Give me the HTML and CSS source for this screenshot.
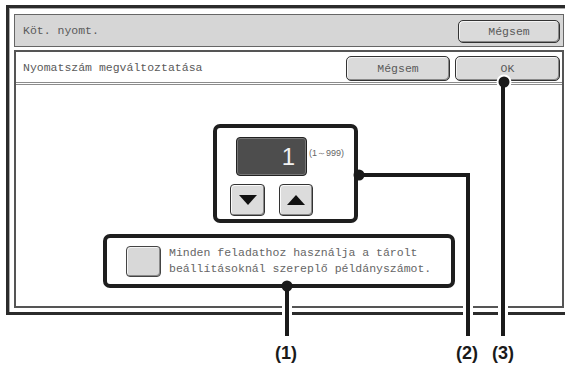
FILE: index.html
```html
<!DOCTYPE html>
<html lang="hu">
<head>
	<meta charset="UTF-8">
	<title>Nyomatszám megváltoztatása</title>
	<link rel="stylesheet" href="styles.css">
</head>
<body>
	<div id="screen">
		<div id="frame">
			<div class="titlebar">
				<span class="caption">Köt. nyomt.</span>
				<button class="btn btn-top">Mégsem</button>
			</div>
			<div class="panel">
				<div class="subbar">
					<span class="caption">Nyomatszám megváltoztatása</span>
					<button class="btn btn-sub">Mégsem</button>
					<button class="btn btn-sub btn-ok">OK</button>
				</div>
				<div class="content">
					<div class="counter mark">
						<div class="counter-row">
							<div class="display">1</div>
							<span class="range">(1～999)</span>
						</div>
						<div class="arrows">
							<button class="arrow"><svg width="18" height="10" viewBox="0 0 18 10"><polygon points="0,0 18,0 9,10" /></svg></button>
							<button class="arrow arrow-up"><svg width="18" height="10" viewBox="0 0 18 10"><polygon points="0,10 18,10 9,0" /></svg></button>
						</div>
					</div>
					<div class="option mark">
						<span class="check"></span>
						<p>Minden feladathoz használja a tárolt<br>beállításoknál szereplő példányszámot.</p>
					</div>
				</div>
			</div>
		</div>

		<!-- magyarázó vonalak -->
		<svg class="callouts" width="565" height="367" viewBox="0 0 565 367">
			<g stroke="#fff" stroke-width="10" fill="none">
				<line x1="287" y1="292" x2="287" y2="336" />
				<line x1="468" y1="180" x2="468" y2="336" />
				<line x1="503" y1="90" x2="503" y2="336" />
			</g>
			<circle cx="504" cy="82" r="7.5" fill="#fff" />
			<g stroke="#1a1a1a" stroke-width="4" fill="none">
				<line x1="287" y1="286" x2="287" y2="336" />
				<polyline points="359,175 468,175 468,336" />
				<line x1="503" y1="82" x2="503" y2="336" />
			</g>
			<g fill="#1a1a1a">
				<circle cx="287" cy="286" r="5.5" />
				<circle cx="359" cy="175" r="5.5" />
				<circle cx="504" cy="82" r="5.5" />
			</g>
			<g class="labels" text-anchor="middle">
				<text x="286" y="359">(1)</text>
				<text x="467" y="359">(2)</text>
				<text x="503" y="359">(3)</text>
			</g>
		</svg>
	</div>
</body>
</html>
```

FILE: styles.css
```css
body { margin:0;background:#fff;font-family:"Liberation Mono","DejaVu Sans Mono",monospace;font-size:11.5px;color:#5a5a5a; }
p { margin:0; }
button { font-family:inherit;font-size:inherit;color:inherit;padding:0;margin:0; }

#screen { position:relative;width:565px;height:367px;padding:5px 0 0 6px;box-sizing:border-box;overflow:hidden; }

#frame { width:562px;border:3px solid #2b2b2b;padding:6px 1px 4px 5px;box-sizing:border-box;box-shadow:inset 1px 1px 0 #aaa; }

.titlebar { display:flex;align-items:center;justify-content:space-between;height:33px;box-sizing:border-box;padding:0 3px 0 8px;background:#d6d6d6;border:1px solid #666; }
.caption { letter-spacing:0; }

.btn { background:#dadada;border:1px solid #333;border-radius:5px;box-shadow:inset -1px -1px 0 #8a8a8a,inset 1px 1px 0 #f4f4f4;text-align:center; }
.btn-top { width:102px;height:23px;margin-top:1px; }

.panel { margin-top:3px;border:2px solid #555;height:258px;box-sizing:border-box;display:flex;flex-direction:column; }

.subbar { display:flex;align-items:center;height:33px;box-sizing:border-box;padding:0 2px 0 7px;border-bottom:3px double #8c8c8c; }
.subbar .caption { flex:1; }
.btn-sub { width:104px;height:25px;margin-left:5px;margin-top:3px; }
.btn-ok { width:105px; }

.content { flex:1;display:flex;flex-direction:column;align-items:flex-start; }

.mark { border:4px solid #1e1e1e;border-radius:7px;box-sizing:border-box; }

.counter { margin:39px 0 0 197px;width:145px;height:99px;padding:9px 0 0 13px; }
.counter-row { display:flex;align-items:flex-start;margin-left:6px; }
.display { width:71px;height:39px;box-sizing:border-box;background:#4d4d4d;border:1px solid #222;border-radius:4px;box-shadow:inset 0 0 0 1px #777;color:#f2f2f2;font-family:"Liberation Sans",Arial,sans-serif;font-size:24px;line-height:37px;text-align:right;padding-right:11px; }
.range { font-family:"Liberation Sans",Arial,sans-serif;font-size:9px;color:#666;margin:10px 0 0 2px;white-space:nowrap; }

.arrows { display:flex;gap:14px;margin-top:8px; }
.arrow { width:35px;height:32px;background:#dcdcdc;border:1px solid #333;border-radius:4px;box-shadow:inset -1px -1px 0 #8a8a8a,inset 1px 1px 0 #fafafa;display:flex;align-items:center;justify-content:center; }
.arrow-up { width:34px; }
.arrow svg { fill:#111;display:block; }

.option { margin:11px 0 0 87px;width:352px;height:54px;display:flex;align-items:center;padding:0 0 0 19px; }
.check { width:35px;height:31px;box-sizing:border-box;background:#d8d8d8;border:1px solid #444;border-radius:4px;box-shadow:inset -1px -1px 0 #8a8a8a,inset 1px 1px 0 #f4f4f4;margin-right:8px;flex:none; }
.option p { line-height:16px;color:#666;white-space:nowrap; }

.callouts { position:absolute;left:0;top:0; }
.labels text { font-family:"Liberation Sans",Arial,sans-serif;font-weight:bold;font-size:18px;fill:#1a1a1a; }
```
